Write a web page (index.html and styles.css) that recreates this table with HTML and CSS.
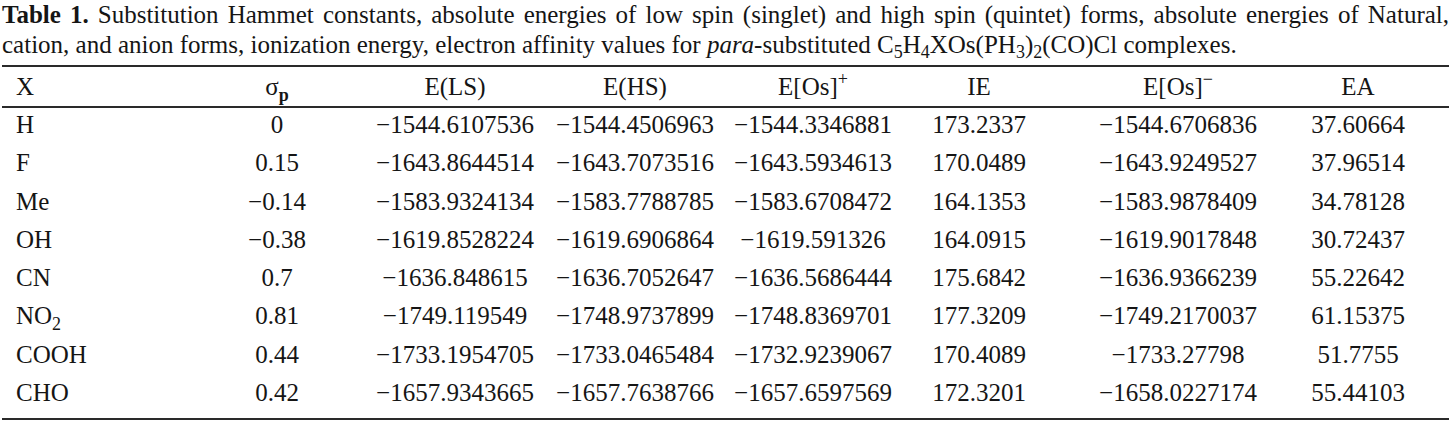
FILE: index.html
```html
<!DOCTYPE html>
<html lang="en">
<head>
    <meta charset="UTF-8">
    <title>Table 1</title>
    <link rel="stylesheet" href="styles.css">
</head>
<body>
    <div class="sheet">
        <p class="caption"><b>Table 1.</b> Substitution Hammet constants, absolute energies of low spin (singlet) and high spin (quintet) forms, absolute energies of Natural, cation, and anion forms, ionization energy, electron affinity values for <i>para</i>-substituted C<sub>5</sub>H<sub>4</sub>XOs(PH<sub>3</sub>)<sub>2</sub>(CO)Cl complexes.</p>

        <table class="data">
            <colgroup>
                <col class="c-x">
                <col class="c-sig">
                <col class="c-ls">
                <col class="c-hs">
                <col class="c-cat">
                <col class="c-ie">
                <col class="c-an">
                <col class="c-ea">
                <col class="c-pad">
            </colgroup>
            <thead>
                <tr>
                    <th class="first">X</th>
                    <th>&sigma;<sub class="bold-sub">p</sub></th>
                    <th>E(LS)</th>
                    <th>E(HS)</th>
                    <th>E[Os]<sup>+</sup></th>
                    <th>IE</th>
                    <th>E[Os]<sup>&minus;</sup></th>
                    <th>EA</th>
                    <th></th>
                </tr>
            </thead>
            <tbody>
                <tr><td class="first">H</td><td>0</td><td>&minus;1544.6107536</td><td>&minus;1544.4506963</td><td>&minus;1544.3346881</td><td>173.2337</td><td>&minus;1544.6706836</td><td>37.60664</td><td></td></tr>
                <tr><td class="first">F</td><td>0.15</td><td>&minus;1643.8644514</td><td>&minus;1643.7073516</td><td>&minus;1643.5934613</td><td>170.0489</td><td>&minus;1643.9249527</td><td>37.96514</td><td></td></tr>
                <tr><td class="first">Me</td><td>&minus;0.14</td><td>&minus;1583.9324134</td><td>&minus;1583.7788785</td><td>&minus;1583.6708472</td><td>164.1353</td><td>&minus;1583.9878409</td><td>34.78128</td><td></td></tr>
                <tr><td class="first">OH</td><td>&minus;0.38</td><td>&minus;1619.8528224</td><td>&minus;1619.6906864</td><td>&minus;1619.591326</td><td>164.0915</td><td>&minus;1619.9017848</td><td>30.72437</td><td></td></tr>
                <tr><td class="first">CN</td><td>0.7</td><td>&minus;1636.848615</td><td>&minus;1636.7052647</td><td>&minus;1636.5686444</td><td>175.6842</td><td>&minus;1636.9366239</td><td>55.22642</td><td></td></tr>
                <tr><td class="first">NO<sub>2</sub></td><td>0.81</td><td>&minus;1749.119549</td><td>&minus;1748.9737899</td><td>&minus;1748.8369701</td><td>177.3209</td><td>&minus;1749.2170037</td><td>61.15375</td><td></td></tr>
                <tr><td class="first">COOH</td><td>0.44</td><td>&minus;1733.1954705</td><td>&minus;1733.0465484</td><td>&minus;1732.9239067</td><td>170.4089</td><td>&minus;1733.27798</td><td>51.7755</td><td></td></tr>
                <tr class="last"><td class="first">CHO</td><td>0.42</td><td>&minus;1657.9343665</td><td>&minus;1657.7638766</td><td>&minus;1657.6597569</td><td>172.3201</td><td>&minus;1658.0227174</td><td>55.44103</td><td></td></tr>
            </tbody>
        </table>
    </div>
</body>
</html>
```

FILE: styles.css
```css
:root {
    --ink: #151515;
    --rule: #2a2a2a;
    --font-family: 'Liberation Serif', 'Times New Roman', serif;
}

* {
    margin: 0;
    padding: 0;
    box-sizing: border-box;
}

body {
    font-family: var(--font-family);
    font-size: 25px;
    color: var(--ink);
    background: #ffffff;
}

.sheet {
    width: 1452px;
    padding: 0 3px 0 2px;
}

.caption {
    line-height: 30px;
    text-align: justify;
    margin-bottom: 5px;
}

.caption sub,
.data sub,
.data sup {
    font-size: 0.72em;
    line-height: 0;
}

.caption sub {
    vertical-align: -0.3em;
}

.data {
    width: 1447px;
    table-layout: fixed;
    border-collapse: collapse;
    border-top: 2px solid var(--rule);
    border-bottom: 2px solid var(--rule);
}

.c-x { width: 198px; }
.c-sig { width: 154px; }
.c-ls { width: 202px; }
.c-hs { width: 158px; }
.c-cat { width: 198px; }
.c-ie { width: 134px; }
.c-an { width: 264px; }
.c-ea { width: 96px; }
.c-pad { width: 43px; }

.data th,
.data td {
    font-weight: normal;
    text-align: center;
    white-space: nowrap;
}

.data th.first,
.data td.first {
    text-align: left;
    padding-left: 14px;
}

.data thead th {
    line-height: 39px;
    border-bottom: 2px solid var(--rule);
}

.data tbody td {
    line-height: 33px;
    padding-bottom: 5.3px;
}

.data tbody tr.last td {
    padding-bottom: 9px;
}

.data sub {
    vertical-align: -0.32em;
}

.data sup {
    vertical-align: 0.55em;
}

.bold-sub {
    font-weight: bold;
}
```
